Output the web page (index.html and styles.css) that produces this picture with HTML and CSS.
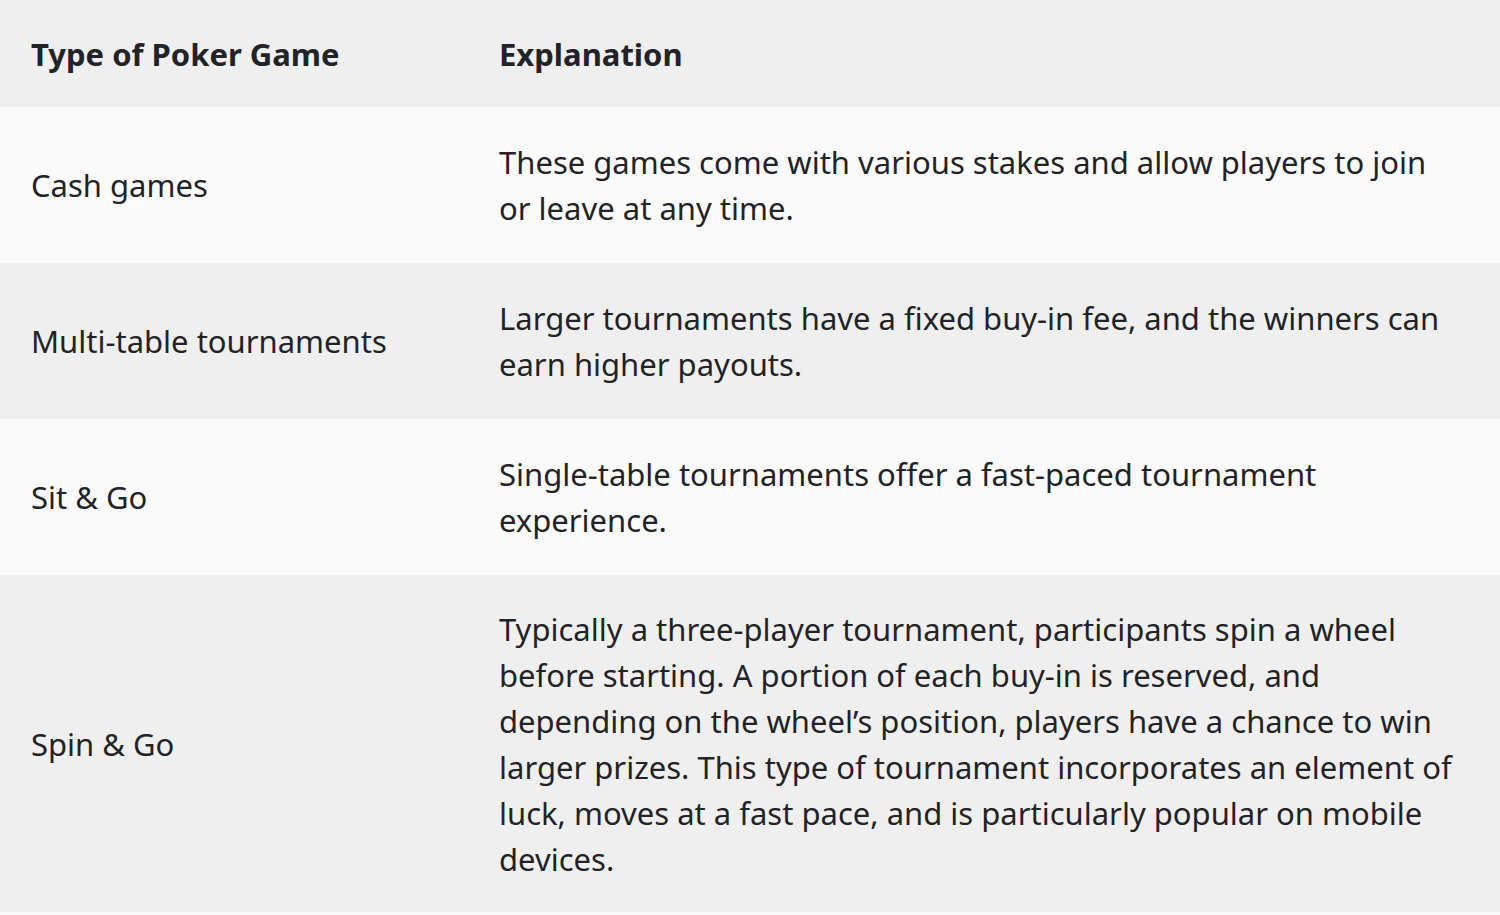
FILE: index.html
```html
<!DOCTYPE html>
<html lang="en">
<head>
<meta charset="utf-8">
<title>Poker Games</title>
<link rel="stylesheet" href="styles.css">
</head>
<body>
<table class="games">
  <thead>
    <tr><th class="col-type">Type of Poker Game</th><th>Explanation</th></tr>
  </thead>
  <tbody>
    <tr class="light"><td>Cash games</td><td>These games come with various stakes and allow players to join or leave at any time.</td></tr>
    <tr class="dark"><td>Multi-table tournaments</td><td>Larger tournaments have a fixed buy-in fee, and the winners can earn higher payouts.</td></tr>
    <tr class="light"><td>Sit &amp; Go</td><td>Single-table tournaments offer a fast-paced tournament experience.</td></tr>
    <tr class="dark last"><td>Spin &amp; Go</td><td>Typically a three-player tournament, participants spin a wheel before starting. A portion of each buy-in is reserved, and depending on the wheel’s position, players have a chance to win larger prizes. This type of tournament incorporates an element of luck, moves at a fast pace, and is particularly popular on mobile devices.</td></tr>
  </tbody>
</table>
</body>
</html>
```
FILE: styles.css
```css
html, body {
  margin: 0;
  padding: 0;
  background: #fafafa;
}
body {
  font-family: "Noto Sans", "Open Sans", sans-serif;
  color: #222326;
}
.games {
  width: 1500px;
  border-collapse: collapse;
  font-size: 31px;
  line-height: 46px;
}
.games th, .games td {
  text-align: left;
  vertical-align: middle;
  padding: 32px 40px 32px 31px;
}
.games th {
  font-weight: 700;
  background: #efefef;
  padding-top: 31px;
  padding-bottom: 30px;
}
.games .col-type {
  width: 397px;
}
.games tr.light td { background: #fafafa; }
.games tr.dark td { background: #efefef; }
.games tr.last td {
  padding-top: 31px;
  padding-bottom: 30px;
}
```
